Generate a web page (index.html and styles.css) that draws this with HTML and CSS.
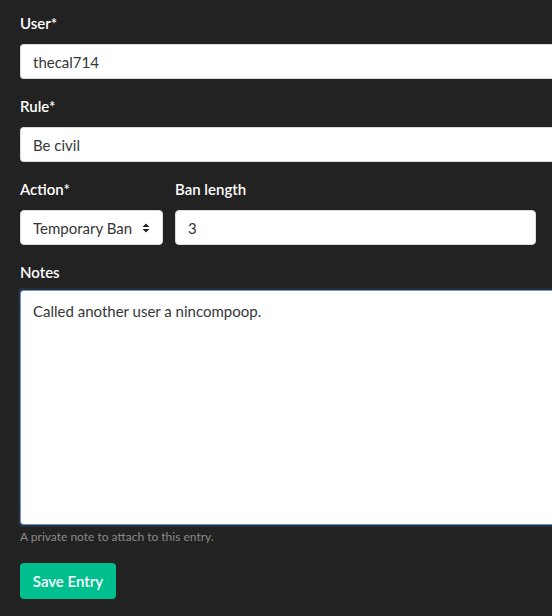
FILE: index.html
```html
<!DOCTYPE html>
<html lang="en">
<head>
<meta charset="utf-8">
<title>Entry</title>
<link rel="stylesheet" href="styles.css">
</head>
<body>
<form class="form">
  <div class="field">
    <label class="label">User*</label>
    <input class="input wide" type="text" value="thecal714">
  </div>
  <div class="field">
    <label class="label">Rule*</label>
    <input class="input wide" type="text" value="Be civil">
  </div>
  <div class="row">
    <div class="field action">
      <label class="label">Action*</label>
      <div class="select-wrap">
        <select class="select"><option>Temporary Ban</option></select>
        <svg class="arrows" width="8" height="10" viewBox="0 0 8 10"><path d="M4 0.5 L7.5 4 L0.5 4 Z M4 9.5 L7.5 6 L0.5 6 Z" fill="#222"/></svg>
      </div>
    </div>
    <div class="field length">
      <label class="label">Ban length</label>
      <input class="input" type="text" value="3">
    </div>
  </div>
  <div class="field notes-field">
    <label class="label notes-label">Notes</label>
    <textarea class="textarea wide">Called another user a nincompoop.</textarea>
    <p class="help">A private note to attach to this entry.</p>
  </div>
  <button class="button" type="button">Save Entry</button>
</form>
</body>
</html>
```
FILE: styles.css
```css
html, body {
  margin: 0;
  padding: 0;
  background: #222222;
  overflow: hidden;
}
body {
  font-family: Lato, "Noto Sans", sans-serif;
  width: 552px;
  height: 616px;
}
.form {
  padding: 11px 0 0 20px;
}
.field {
  margin-bottom: 15px;
}
.label {
  display: block;
  color: #ffffff;
  font-weight: 600;
  font-size: 15px;
  line-height: 24px;
  margin-bottom: 9px;
}
.notes-label {
  margin-bottom: 6px;
}
.input, .select, .textarea {
  box-sizing: border-box;
  display: block;
  font-family: Lato, "Noto Sans", sans-serif;
  font-size: 15px;
  color: #363636;
  background: #ffffff;
  border: 1px solid #dbdbdb;
  border-radius: 4px;
  padding: 0 12px;
  height: 35px;
  outline: none;
  margin: 0;
}
.wide {
  width: 532px;
  border-right: none;
  border-radius: 4px 0 0 4px;
}
.row {
  display: flex;
  gap: 12px;
}
.action {
  width: 143px;
  flex: none;
}
.length {
  width: 361px;
  flex: none;
}
.length .input {
  width: 100%;
}
.select-wrap {
  position: relative;
}
.select {
  width: 100%;
  appearance: none;
  -webkit-appearance: none;
  padding-right: 24px;
}
.arrows {
  position: absolute;
  right: 13px;
  top: 13px;
  pointer-events: none;
}
.notes-field {
  margin-bottom: 17px;
}
.textarea {
  height: 235px;
  padding: 10px 12px;
  line-height: 21px;
  resize: none;
  border-color: #7095c8;
  box-shadow: -2px 0 0 0 #26303a, 0 2px 0 0 #26303a, 0 -2px 0 0 #26303a, -2px 2px 0 0 #26303a, -2px -2px 0 0 #26303a;
}
.help {
  margin: 3px 0 0;
  font-size: 12px;
  line-height: 18px;
  color: #8a8a8a;
}
.button {
  box-sizing: border-box;
  display: block;
  width: 96px;
  height: 36px;
  padding: 0;
  border: none;
  border-radius: 4px;
  background: #00bf8e;
  color: #ffffff;
  font-family: Lato, "Noto Sans", sans-serif;
  font-weight: 600;
  font-size: 15px;
}
```
